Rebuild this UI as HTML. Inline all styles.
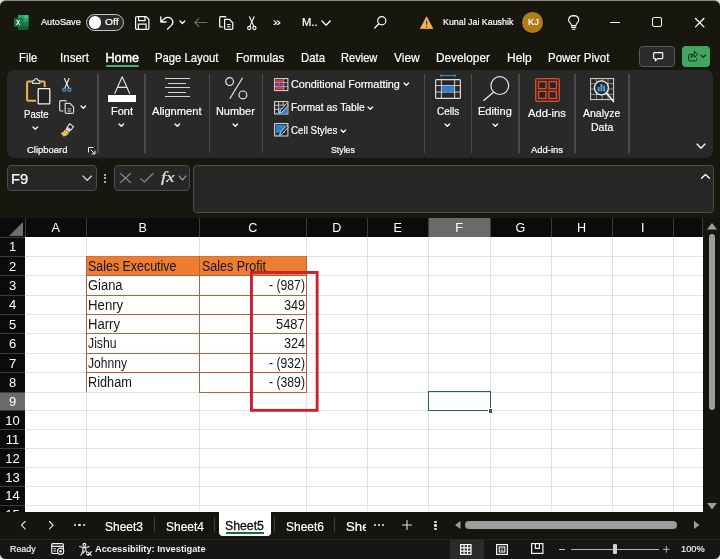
<!DOCTYPE html>
<html><head><meta charset="utf-8"><title>Excel</title>
<style>
*{box-sizing:border-box;margin:0;padding:0}
html,body{width:720px;height:559px;overflow:hidden;background:#dcdcdc}
body{font-family:"Liberation Sans",sans-serif;color:#fff;position:relative;font-size:12px}
#app{position:absolute;left:0;top:0;width:720px;height:559px;background:#17160f;overflow:hidden;border-radius:6px;border-top:1px solid #8d8d8a}
#in{position:absolute;left:0;top:-1px;width:720px;height:559px;will-change:transform}
#app div,#app span,#app svg{position:absolute}
.t{white-space:nowrap;line-height:1;color:#fff;transform-origin:0 0;-webkit-text-stroke:0.2px currentColor}
svg{overflow:visible}
</style></head>
<body>
<div id="app"><div id="in">
<svg style="left:14.00px;top:15.00px;" width="14.50" height="15.00" viewBox="0 0 29 30"><rect x="8" y="0" width="21" height="30" rx="2" fill="#185c37"/><rect x="8" y="0" width="10.5" height="7.5" fill="#21a366"/><rect x="18.5" y="0" width="10.5" height="7.5" fill="#33c481"/><rect x="8" y="7.5" width="10.5" height="7.5" fill="#107c41"/><rect x="18.5" y="7.5" width="10.5" height="7.5" fill="#21a366"/><rect x="8" y="15" width="10.5" height="7.5" fill="#185c37"/><rect x="18.5" y="15" width="10.5" height="7.5" fill="#107c41"/><rect x="0" y="6.5" width="17" height="17" rx="1.5" fill="#107c41"/><text x="8.5" y="19.6" font-family="Liberation Sans, sans-serif" font-weight="bold" font-size="13" fill="#fff" text-anchor="middle">X</text></svg>
<span class="t" style="transform:scaleX(0.987);left:41.49px;top:18.13px;font-size:9.30px;color:#fff;">AutoSave</span>
<div style="left:86.20px;top:13.70px;width:38.20px;height:17.60px;background:#2a2a2a;border:1px solid #c4c4c4;border-radius:9px;"></div>
<div style="left:88.80px;top:16.30px;width:12.40px;height:12.40px;background:#fff;border-radius:50%;"></div>
<span class="t" style="transform:scaleX(1.105);left:104.99px;top:18.13px;font-size:9.30px;color:#fff;">Off</span>
<svg style="left:135.00px;top:15.50px;" width="14.50" height="14.00" viewBox="0 0 14.5 14"><path d="M1.6 0.6 H11 L13.9 3.5 V12.2 Q13.9 13.4 12.7 13.4 H1.8 Q0.6 13.4 0.6 12.2 V1.8 Q0.6 0.6 1.8 0.6 Z" fill="none" stroke="#fff" stroke-width="1.2"/><path d="M3.6 0.8 V4.6 H10 V0.8" fill="none" stroke="#fff" stroke-width="1.2"/><path d="M3.4 13.2 V8.2 H11.1 V13.2" fill="none" stroke="#fff" stroke-width="1.2"/></svg>
<svg style="left:160.00px;top:15.50px;" width="14.00" height="13.50" viewBox="0 0 14 13.5"><path d="M0.8 0.8 V6 H6 M1 5.8 L4.4 2.6 Q8 0 11.2 2.6 Q14.6 6 11.2 9.6 L7.6 13" fill="none" stroke="#fff" stroke-width="1.3" stroke-linecap="round" stroke-linejoin="round" /></svg>
<svg style="left:179.60px;top:21.35px;" width="4.80" height="2.50" viewBox="0 0 4.8 2.5"><path d="M0 0 L2.4 2.5 L4.8 0" fill="none" stroke="#fff" stroke-width="1.25" stroke-linecap="round" stroke-linejoin="round"/></svg>
<svg style="left:193.70px;top:17.50px;" width="13.50" height="9.00" viewBox="0 0 13.5 9"><path d="M13 4.5 H0.8 M4.8 0.6 L0.8 4.5 L4.8 8.4" fill="none" stroke="#6b6b6b" stroke-width="1.2" stroke-linecap="round" stroke-linejoin="round" /></svg>
<svg style="left:218.70px;top:15.50px;" width="14.50" height="14.00" viewBox="0 0 14.5 14"><path d="M4.2 11 H1.8 Q0.7 11 0.7 9.9 V1.8 Q0.7 0.7 1.8 0.7 H6 Q7 0.7 7 1.6" fill="none" stroke="#fff" stroke-width="1.2"/><path d="M5.6 3.4 H10.4 L13.8 6.8 V12.2 Q13.8 13.3 12.7 13.3 H6.7 Q5.6 13.3 5.6 12.2 Z" fill="none" stroke="#fff" stroke-width="1.2"/><path d="M8 8.6 H11.6 M8 10.8 H11.6" stroke="#fff" stroke-width="1"/></svg>
<svg style="left:246.70px;top:15.50px;" width="9.60" height="14.50" viewBox="0 0 10 14.5"><path d="M2.6 0.5 L7.2 10.8 M7.4 0.5 L2.8 10.8" fill="none" stroke="#fff" stroke-width="1.1" stroke-linecap="round"/><circle cx="2.3" cy="12.2" r="1.7" fill="none" stroke="#fff" stroke-width="1.1"/><circle cx="7.7" cy="12.2" r="1.7" fill="none" stroke="#fff" stroke-width="1.1"/></svg>
<span class="t" style="transform:scaleX(1.243);left:272.87px;top:16.57px;font-size:11.50px;color:#fff;">»</span>
<span class="t" style="transform:scaleX(1.123);left:301.95px;top:17.54px;font-size:10.00px;color:#fff;">M..</span>
<svg style="left:322.30px;top:20.60px;" width="8.20" height="4.20" viewBox="0 0 8.2 4.2"><path d="M0 0 L4.1 4.2 L8.2 0" fill="none" stroke="#fff" stroke-width="1.3" stroke-linecap="round" stroke-linejoin="round"/></svg>
<svg style="left:373.70px;top:16.00px;" width="12.60" height="12.80" viewBox="0 0 12.6 12.8"><circle cx="7.8" cy="4.8" r="4.1" fill="none" stroke="#fff" stroke-width="1.2"/><path d="M4.8 7.8 L0.7 12" stroke="#fff" stroke-width="1.3" stroke-linecap="round"/></svg>
<svg style="left:420.00px;top:15.50px;" width="13.20" height="13.20" viewBox="0 0 13.2 13.2"><path d="M6.6 0.8 L12.8 12.6 H0.4 Z" fill="#f0b45a" stroke="#f0b45a" stroke-width="0.8" stroke-linejoin="round"/><path d="M6.6 4.6 V8.8" stroke="#5a3a10" stroke-width="1.3"/><circle cx="6.6" cy="10.8" r="0.8" fill="#5a3a10"/></svg>
<span class="t" style="transform:scaleX(0.952);left:443.19px;top:18.13px;font-size:9.30px;color:#fff;">Kunal Jai Kaushik</span>
<div style="left:522.30px;top:11.60px;width:21.00px;height:21.00px;background:#b07d1d;border-radius:50%;"></div>
<span class="t" style="transform:scaleX(1.071);left:527.73px;top:18.32px;font-size:8.60px;color:#fff;">KJ</span>
<svg style="left:567.50px;top:15.00px;" width="11.40" height="15.00" viewBox="0 0 11.4 15"><path d="M3.4 10.6 Q3.4 9 2.2 7.8 Q0.6 6.4 0.6 5 Q0.8 0.7 5.7 0.6 Q10.6 0.7 10.8 5 Q10.8 6.4 9.2 7.8 Q8 9 8 10.6 Z" fill="none" stroke="#fff" stroke-width="1.1" stroke-linejoin="round"/><path d="M3.6 12.4 H7.8 M4.4 14.2 H7" stroke="#fff" stroke-width="1.1" stroke-linecap="round"/></svg>
<div style="left:610.00px;top:21.60px;width:9.60px;height:1.20px;background:#fff;"></div>
<div style="left:652.00px;top:17.40px;width:10.40px;height:9.80px;background:transparent;border:1.3px solid #fff;border-radius:2px;"></div>
<svg style="left:695.00px;top:17.80px;" width="9.40" height="9.40" viewBox="0 0 9.4 9.4"><path d="M0.5 0.5 L8.9 8.9 M8.9 0.5 L0.5 8.9" fill="none" stroke="#fff" stroke-width="1.3" stroke-linecap="round" stroke-linejoin="round" /></svg>
<span class="t" style="transform:scaleX(0.896);left:18.81px;top:51.53px;font-size:12.60px;color:#fff;">File</span>
<span class="t" style="transform:scaleX(0.917);left:59.81px;top:51.53px;font-size:12.60px;color:#fff;">Insert</span>
<span class="t" style="transform:scaleX(0.896);left:155.31px;top:51.53px;font-size:12.60px;color:#fff;">Page Layout</span>
<span class="t" style="transform:scaleX(0.918);left:236.31px;top:51.53px;font-size:12.60px;color:#fff;">Formulas</span>
<span class="t" style="transform:scaleX(0.905);left:301.11px;top:51.53px;font-size:12.60px;color:#fff;">Data</span>
<span class="t" style="transform:scaleX(0.881);left:341.31px;top:51.53px;font-size:12.60px;color:#fff;">Review</span>
<span class="t" style="transform:scaleX(0.949);left:393.81px;top:51.53px;font-size:12.60px;color:#fff;">View</span>
<span class="t" style="transform:scaleX(0.939);left:435.61px;top:51.53px;font-size:12.60px;color:#fff;">Developer</span>
<span class="t" style="transform:scaleX(0.953);left:506.81px;top:51.53px;font-size:12.60px;color:#fff;">Help</span>
<span class="t" style="transform:scaleX(0.913);left:548.11px;top:51.53px;font-size:12.60px;color:#fff;">Power Pivot</span>
<span class="t" style="transform:scaleX(1.000);left:105.51px;top:51.53px;font-size:12.60px;color:#fff;-webkit-text-stroke:0.45px #fff;">Home</span>
<div style="left:106.20px;top:65.40px;width:32.40px;height:1.60px;background:#4fae74;border-radius:1px;"></div>
<div style="left:639.00px;top:46.30px;width:36.30px;height:20.40px;background:#2b2b2b;border:1px solid #5c5c5c;border-radius:4px;"></div>
<svg style="left:652.50px;top:51.50px;" width="10.40" height="9.60" viewBox="0 0 10.4 9.6"><path d="M1.4 0.6 H9 Q9.8 0.6 9.8 1.4 V5.8 Q9.8 6.6 9 6.6 H4.6 L2.4 8.8 V6.6 H1.4 Q0.6 6.6 0.6 5.8 V1.4 Q0.6 0.6 1.4 0.6 Z" fill="none" stroke="#fff" stroke-width="1.1" stroke-linecap="round" stroke-linejoin="round" /></svg>
<div style="left:682.00px;top:46.30px;width:28.20px;height:20.40px;background:#41a65f;border-radius:4px;"></div>
<svg style="left:688.00px;top:51.00px;" width="10.50" height="10.50" viewBox="0 0 10.5 10.5"><path d="M4 3.4 H1.6 Q0.6 3.4 0.6 4.4 V8.9 Q0.6 9.9 1.6 9.9 H7.6 Q8.6 9.9 8.6 8.9 V7.6 M6.6 0.6 L9.9 3.4 L6.6 6.2 V4.4 Q4 4.4 3 6.8 Q3 2.6 6.6 2.4 Z" fill="none" stroke="#14301d" stroke-width="1.0" stroke-linecap="round" stroke-linejoin="round" /></svg>
<svg style="left:701.30px;top:55.20px;" width="4.60" height="2.40" viewBox="0 0 4.6 2.4"><path d="M0 0 L2.3 2.4 L4.6 0" fill="none" stroke="#14301d" stroke-width="1.2" stroke-linecap="round" stroke-linejoin="round"/></svg>
<div style="left:7.00px;top:70.00px;width:706.00px;height:87.50px;background:#292929;border-radius:7px;"></div>
<div style="left:97.35px;top:74.00px;width:1.30px;height:78.80px;background:#4a4a4a;"></div>
<div style="left:144.35px;top:74.00px;width:1.30px;height:78.80px;background:#4a4a4a;"></div>
<div style="left:208.85px;top:74.00px;width:1.30px;height:78.80px;background:#4a4a4a;"></div>
<div style="left:261.85px;top:74.00px;width:1.30px;height:78.80px;background:#4a4a4a;"></div>
<div style="left:423.85px;top:74.00px;width:1.30px;height:78.80px;background:#4a4a4a;"></div>
<div style="left:470.85px;top:74.00px;width:1.30px;height:78.80px;background:#4a4a4a;"></div>
<div style="left:518.35px;top:74.00px;width:1.30px;height:78.80px;background:#4a4a4a;"></div>
<div style="left:574.35px;top:74.00px;width:1.30px;height:78.80px;background:#4a4a4a;"></div>
<div style="left:628.35px;top:74.00px;width:1.30px;height:78.80px;background:#4a4a4a;"></div>
<svg style="left:25.70px;top:77.50px;" width="24.50" height="27.00" viewBox="0 0 24.5 27"><path d="M7 3.6 H2.4 Q1.1 3.6 1.1 4.9 V21.4 Q1.1 22.7 2.4 22.7 H10" fill="none" stroke="#f0b252" stroke-width="2"/><path d="M14 3.6 H17.4 Q18.7 3.6 18.7 4.9 V9" fill="none" stroke="#f0b252" stroke-width="2"/><path d="M6.6 5.4 V3.4 Q6.6 2.4 7.6 2.4 H8.4 Q8.6 0.6 10.2 0.6 Q11.8 0.6 12 2.4 H12.8 Q13.8 2.4 13.8 3.4 V5.4 Z" fill="#292929" stroke="#d8d8d8" stroke-width="1.1" stroke-linejoin="round"/><rect x="12.2" y="10.6" width="11.6" height="15.2" rx="0.6" fill="#222" stroke="#f0f0f0" stroke-width="1.3"/></svg>
<span class="t" style="transform:scaleX(0.812);left:23.95px;top:109.41px;font-size:11.80px;color:#fff;">Paste</span>
<svg style="left:33.20px;top:126.65px;" width="4.60" height="2.30" viewBox="0 0 4.6 2.3"><path d="M0 0 L2.3 2.3 L4.6 0" fill="none" stroke="#fff" stroke-width="1.25" stroke-linecap="round" stroke-linejoin="round"/></svg>
<svg style="left:61.70px;top:77.50px;" width="9.60" height="14.00" viewBox="0 0 10 14.5"><path d="M2.6 0.5 L7.2 10.8 M7.4 0.5 L2.8 10.8" fill="none" stroke="#fff" stroke-width="1.1" stroke-linecap="round"/><circle cx="2.3" cy="12.2" r="1.7" fill="none" stroke="#4aa3e8" stroke-width="1.1"/><circle cx="7.7" cy="12.2" r="1.7" fill="none" stroke="#4aa3e8" stroke-width="1.1"/></svg>
<svg style="left:58.70px;top:100.00px;" width="15.50" height="14.00" viewBox="0 0 15.5 14"><path d="M4.6 11 H1.8 Q0.7 11 0.7 9.9 V1.8 Q0.7 0.7 1.8 0.7 H6.4 Q7.4 0.7 7.4 1.6" fill="none" stroke="#d8d8d8" stroke-width="1.2"/><path d="M6.2 3.4 H11 L14.6 7 V12.2 Q14.6 13.3 13.5 13.3 H7.3 Q6.2 13.3 6.2 12.2 Z" fill="none" stroke="#d8d8d8" stroke-width="1.2"/><path d="M8.6 8.8 H12.2 M8.6 11 H12.2" stroke="#d8d8d8" stroke-width="1"/></svg>
<svg style="left:81.00px;top:106.25px;" width="4.60" height="2.30" viewBox="0 0 4.6 2.3"><path d="M0 0 L2.3 2.3 L4.6 0" fill="none" stroke="#fff" stroke-width="1.25" stroke-linecap="round" stroke-linejoin="round"/></svg>
<svg style="left:60.00px;top:122.50px;" width="14.50" height="14.00" viewBox="0 0 14.5 14"><path d="M9.6 0.8 L13.6 3.6 L11 7 L7.2 4.2 Z" fill="none" stroke="#e6e6e6" stroke-width="1.1" stroke-linejoin="round"/><path d="M6.6 4.6 L10.6 7.6 L9.4 9.2 L5.4 6.2 Z" fill="#e6e6e6"/><path d="M5 6.6 L9 9.6 Q7.4 13.6 3.4 13.4 L0.6 10 Q3.6 9.6 5 6.6 Z" fill="#eeb75c"/></svg>
<span class="t" style="transform:scaleX(1.007);left:27.28px;top:145.04px;font-size:9.40px;color:#fff;">Clipboard</span>
<svg style="left:87.80px;top:146.50px;" width="7.60" height="7.40" viewBox="0 0 7.6 7.4"><path d="M0.5 5.4 V0.5 H5.4 M2.8 2.8 L6.8 6.8 M7 3.6 V7 H3.6" fill="none" stroke="#f0f0f0" stroke-width="1"/></svg>
<svg style="left:113.70px;top:76.30px;" width="16.40" height="18.20" viewBox="0 0 16.4 18.2"><path d="M0.6 17.8 L8.2 0.8 L15.8 17.8 M3.6 11.4 H12.8" fill="none" stroke="#e8e8e8" stroke-width="1.1" stroke-linejoin="round"/></svg>
<div style="left:107.60px;top:94.60px;width:28.60px;height:7.60px;background:#fff;"></div>
<span class="t" style="transform:scaleX(0.932);left:111.15px;top:106.11px;font-size:11.80px;color:#fff;">Font</span>
<svg style="left:119.20px;top:124.05px;" width="4.60" height="2.30" viewBox="0 0 4.6 2.3"><path d="M0 0 L2.3 2.3 L4.6 0" fill="none" stroke="#fff" stroke-width="1.25" stroke-linecap="round" stroke-linejoin="round"/></svg>
<div style="left:165.00px;top:78.40px;width:24.80px;height:1.10px;background:#d4d4d4;"></div>
<div style="left:168.40px;top:82.80px;width:17.80px;height:1.10px;background:#d4d4d4;"></div>
<div style="left:165.00px;top:87.20px;width:24.80px;height:1.10px;background:#d4d4d4;"></div>
<div style="left:168.40px;top:91.60px;width:17.80px;height:1.10px;background:#d4d4d4;"></div>
<div style="left:165.00px;top:96.00px;width:24.80px;height:1.10px;background:#d4d4d4;"></div>
<span class="t" style="transform:scaleX(0.945);left:152.35px;top:106.11px;font-size:11.80px;color:#fff;">Alignment</span>
<svg style="left:174.70px;top:124.05px;" width="4.60" height="2.30" viewBox="0 0 4.6 2.3"><path d="M0 0 L2.3 2.3 L4.6 0" fill="none" stroke="#fff" stroke-width="1.25" stroke-linecap="round" stroke-linejoin="round"/></svg>
<svg style="left:225.00px;top:77.00px;" width="22.50" height="22.50" viewBox="0 0 22.5 22.5"><circle cx="4.6" cy="4.6" r="3.9" fill="none" stroke="#e8e8e8" stroke-width="1.2"/><circle cx="17.9" cy="17.9" r="3.9" fill="none" stroke="#e8e8e8" stroke-width="1.2"/><path d="M17.6 0.8 L4.8 21.8" stroke="#e8e8e8" stroke-width="1.2"/></svg>
<span class="t" style="transform:scaleX(0.924);left:216.35px;top:106.11px;font-size:11.80px;color:#fff;">Number</span>
<svg style="left:233.40px;top:124.05px;" width="4.60" height="2.30" viewBox="0 0 4.6 2.3"><path d="M0 0 L2.3 2.3 L4.6 0" fill="none" stroke="#fff" stroke-width="1.25" stroke-linecap="round" stroke-linejoin="round"/></svg>
<svg style="left:273.70px;top:77.50px;" width="14.50" height="13.20" viewBox="0 0 14.5 13.2"><rect x="0.6" y="0.6" width="13.3" height="12" fill="#292929" stroke="#e0e0e0" stroke-width="1"/><path d="M0.6 4.4 H13.9 M0.6 8.6 H13.9 M9.8 0.6 V12.6" stroke="#d8d8d8" stroke-width="0.7"/><rect x="1.8" y="1.6" width="7.2" height="2.6" fill="#ee2f3a"/><rect x="10.6" y="1.8" width="2" height="2" fill="#1c1c1c"/><rect x="3.6" y="4.6" width="3" height="4" fill="#3a7bd5"/><rect x="1.6" y="5.2" width="1.4" height="2.8" fill="#ee2f3a"/><rect x="7.2" y="5.2" width="1.6" height="2.8" fill="#ee2f3a"/><rect x="1.8" y="9" width="7.2" height="2.6" fill="#ee2f3a"/></svg>
<span class="t" style="transform:scaleX(0.917);left:291.35px;top:79.01px;font-size:11.80px;color:#fff;">Conditional Formatting</span>
<svg style="left:403.70px;top:83.45px;" width="4.60" height="2.30" viewBox="0 0 4.6 2.3"><path d="M0 0 L2.3 2.3 L4.6 0" fill="none" stroke="#fff" stroke-width="1.25" stroke-linecap="round" stroke-linejoin="round"/></svg>
<svg style="left:273.70px;top:101.00px;" width="14.50" height="13.60" viewBox="0 0 14.5 13.6"><rect x="0.6" y="0.6" width="13.3" height="12.4" fill="#292929" stroke="#e0e0e0" stroke-width="1"/><rect x="4.8" y="6.6" width="8.6" height="5.8" fill="#2f7fd8"/><path d="M0.6 4.2 H13.9 M0.6 8.4 H4.6 M4.6 0.6 V13 M9.2 0.6 V4.2" stroke="#e0e0e0" stroke-width="0.8"/><path d="M12.6 2.4 L14.4 4 L8.4 10.8 L5.4 12.4 L6.6 9.2 Z" fill="#292929" stroke="#e8e8e8" stroke-width="0.9" stroke-linejoin="round"/><path d="M5.4 12.4 Q3 13.4 2.4 11.4" fill="none" stroke="#4aa3e8" stroke-width="1"/></svg>
<span class="t" style="transform:scaleX(0.875);left:291.35px;top:102.21px;font-size:11.80px;color:#fff;">Format as Table</span>
<svg style="left:368.30px;top:106.85px;" width="4.60" height="2.30" viewBox="0 0 4.6 2.3"><path d="M0 0 L2.3 2.3 L4.6 0" fill="none" stroke="#fff" stroke-width="1.25" stroke-linecap="round" stroke-linejoin="round"/></svg>
<svg style="left:273.70px;top:123.40px;" width="14.50" height="13.60" viewBox="0 0 14.5 13.6"><rect x="0.6" y="0.6" width="13.3" height="12.4" fill="#292929" stroke="#e0e0e0" stroke-width="1"/><rect x="1.8" y="1.8" width="9" height="8" fill="#2f7fd8"/><path d="M12.6 2.4 L14.4 4 L8.4 10.8 L5.4 12.4 L6.6 9.2 Z" fill="#292929" stroke="#e8e8e8" stroke-width="0.9" stroke-linejoin="round"/><path d="M5.4 12.4 Q3 13.4 2.4 11.4" fill="none" stroke="#4aa3e8" stroke-width="1"/></svg>
<span class="t" style="transform:scaleX(0.831);left:291.35px;top:125.01px;font-size:11.80px;color:#fff;">Cell Styles</span>
<svg style="left:340.70px;top:129.65px;" width="4.60" height="2.30" viewBox="0 0 4.6 2.3"><path d="M0 0 L2.3 2.3 L4.6 0" fill="none" stroke="#fff" stroke-width="1.25" stroke-linecap="round" stroke-linejoin="round"/></svg>
<span class="t" style="transform:scaleX(0.934);left:331.28px;top:145.04px;font-size:9.40px;color:#fff;">Styles</span>
<svg style="left:435.00px;top:74.00px;" width="26.00" height="25.00" viewBox="0 0 26 25"><path d="M6 1.6 H20 M6 0 V3.2 M20 0 V3.2" stroke="#3f8fe6" stroke-width="1"/><rect x="0.6" y="5.6" width="24.8" height="18.8" rx="1" fill="#292929" stroke="#e0e0e0" stroke-width="1.1"/><path d="M0.6 11.6 H25.4 M0.6 18 H25.4 M6.4 5.6 V24.4 M19.6 5.6 V24.4" stroke="#e0e0e0" stroke-width="0.9"/><rect x="6.9" y="12.1" width="12.2" height="5.4" fill="#2f7fd8"/></svg>
<span class="t" style="transform:scaleX(0.850);left:436.85px;top:105.81px;font-size:11.80px;color:#fff;">Cells</span>
<svg style="left:445.40px;top:124.05px;" width="4.60" height="2.30" viewBox="0 0 4.6 2.3"><path d="M0 0 L2.3 2.3 L4.6 0" fill="none" stroke="#fff" stroke-width="1.25" stroke-linecap="round" stroke-linejoin="round"/></svg>
<svg style="left:482.50px;top:76.00px;" width="26.50" height="25.00" viewBox="0 0 26.5 25"><circle cx="16.8" cy="9.6" r="8.9" fill="none" stroke="#e8e8e8" stroke-width="1.2"/><path d="M10.4 16.2 L0.8 24.4" stroke="#e8e8e8" stroke-width="1.3" stroke-linecap="round"/></svg>
<span class="t" style="transform:scaleX(0.937);left:478.35px;top:105.81px;font-size:11.80px;color:#fff;">Editing</span>
<svg style="left:492.70px;top:124.05px;" width="4.60" height="2.30" viewBox="0 0 4.6 2.3"><path d="M0 0 L2.3 2.3 L4.6 0" fill="none" stroke="#fff" stroke-width="1.25" stroke-linecap="round" stroke-linejoin="round"/></svg>
<svg style="left:535.00px;top:77.50px;" width="25.00" height="24.00" viewBox="0 0 25 24"><rect x="0.7" y="0.7" width="23.6" height="22.6" rx="1.5" fill="#47221a" stroke="#d5532c" stroke-width="1.3"/><rect x="3.6" y="3.6" width="7.4" height="7" fill="#2a2422" stroke="#d5532c" stroke-width="1.3"/><rect x="14" y="3.6" width="7.4" height="7" fill="#2a2422" stroke="#d5532c" stroke-width="1.3"/><rect x="3.6" y="13.4" width="7.4" height="7" fill="#2a2422" stroke="#d5532c" stroke-width="1.3"/><rect x="14" y="13.4" width="7.4" height="7" fill="#2a2422" stroke="#d5532c" stroke-width="1.3"/></svg>
<span class="t" style="transform:scaleX(0.945);left:528.35px;top:107.61px;font-size:11.80px;color:#fff;">Add-ins</span>
<span class="t" style="transform:scaleX(1.007);left:530.98px;top:145.04px;font-size:9.40px;color:#fff;">Add-ins</span>
<svg style="left:590.00px;top:77.50px;" width="25.00" height="25.00" viewBox="0 0 25 25"><rect x="0.6" y="0.6" width="23" height="21" fill="#292929" stroke="#d8d8d8" stroke-width="1"/><path d="M0.6 5.6 H23.6 M0.6 11 H23.6 M0.6 16.4 H23.6 M6.4 0.6 V21.6 M12.2 0.6 V21.6 M18 0.6 V21.6" stroke="#bdbdbd" stroke-width="0.7"/><circle cx="11.4" cy="9.8" r="7" fill="#292929" stroke="#f0f0f0" stroke-width="1.3"/><rect x="7.6" y="9" width="2" height="4.4" fill="#4aa3e8"/><rect x="10.4" y="6" width="2" height="7.4" fill="#4aa3e8"/><rect x="13.2" y="7.6" width="2" height="5.8" fill="#4aa3e8"/><path d="M16.4 15 L23.6 23.6" stroke="#f0f0f0" stroke-width="1.6" stroke-linecap="round"/></svg>
<span class="t" style="transform:scaleX(0.888);left:583.35px;top:107.61px;font-size:11.80px;color:#fff;">Analyze</span>
<span class="t" style="transform:scaleX(0.895);left:590.85px;top:121.61px;font-size:11.80px;color:#fff;">Data</span>
<svg style="left:696.50px;top:144.40px;" width="8.00" height="4.20" viewBox="0 0 8 4.2"><path d="M0 0 L4.0 4.2 L8 0" fill="none" stroke="#fff" stroke-width="1.3" stroke-linecap="round" stroke-linejoin="round"/></svg>
<div style="left:7.00px;top:165.00px;width:90.00px;height:25.50px;background:#272727;border:1px solid #4b4b49;border-radius:4px;"></div>
<div style="left:113.70px;top:165.00px;width:76.00px;height:25.50px;background:#272727;border:1px solid #4b4b49;border-radius:4px;"></div>
<div style="left:193.00px;top:165.00px;width:521.00px;height:47.50px;background:#272727;border:1px solid #4b4b49;border-radius:4px;"></div>
<span class="t" style="transform:scaleX(1.042);left:10.52px;top:171.58px;font-size:14.20px;color:#fff;">F9</span>
<svg style="left:82.60px;top:176.10px;" width="8.40" height="4.40" viewBox="0 0 8.4 4.4"><path d="M0 0 L4.2 4.4 L8.4 0" fill="none" stroke="#e0e0e0" stroke-width="1.2" stroke-linecap="round" stroke-linejoin="round"/></svg>
<div style="left:104.20px;top:173.60px;width:2.00px;height:2.00px;background:#e0e0e0;border-radius:50%;"></div>
<div style="left:104.20px;top:177.20px;width:2.00px;height:2.00px;background:#e0e0e0;border-radius:50%;"></div>
<div style="left:104.20px;top:180.80px;width:2.00px;height:2.00px;background:#e0e0e0;border-radius:50%;"></div>
<svg style="left:119.70px;top:173.00px;" width="11.00" height="10.00" viewBox="0 0 11 10"><path d="M0.5 0.5 L10.5 9.5 M10.5 0.5 L0.5 9.5" fill="none" stroke="#8a8a8a" stroke-width="1.1" stroke-linecap="round" stroke-linejoin="round" /></svg>
<svg style="left:139.50px;top:173.40px;" width="13.60" height="9.40" viewBox="0 0 13.6 9.4"><path d="M0.5 5.6 L4.4 9 L13.1 0.5" fill="none" stroke="#8a8a8a" stroke-width="1.1" stroke-linecap="round" stroke-linejoin="round" /></svg>
<span class="t" style="transform:scaleX(1.339);left:161.23px;top:171.35px;font-size:14.00px;color:#e4e4e4;font-family:'Liberation Serif',serif;font-style:italic;">fx</span>
<svg style="left:178.80px;top:176.40px;" width="7.00" height="3.80" viewBox="0 0 7 3.8"><path d="M0 0 L3.5 3.8 L7 0" fill="none" stroke="#b0b0b0" stroke-width="1.1" stroke-linecap="round" stroke-linejoin="round"/></svg>
<svg style="left:700.80px;top:174.20px;" width="9.00" height="4.80" viewBox="0 0 9 4.8"><path d="M0.5 4.3 L4.5 0.5 L8.5 4.3" fill="none" stroke="#fff" stroke-width="1.3" stroke-linecap="round" stroke-linejoin="round" /></svg>
<div style="left:0.00px;top:218.00px;width:702.50px;height:293.50px;background:#fff;"></div>
<div style="left:0.00px;top:218.00px;width:702.50px;height:19.00px;background:#0b0b0b;"></div>
<div style="left:0.00px;top:218.00px;width:25.00px;height:293.50px;background:#0b0b0b;"></div>
<div style="left:428.80px;top:218.00px;width:61.20px;height:19.00px;background:#6a6a6a;"></div>
<div style="left:0.00px;top:392.50px;width:25.00px;height:18.30px;background:#6a6a6a;"></div>
<svg style="left:9.00px;top:221.50px;" width="14.00" height="14.00" viewBox="0 0 14 14"><path d="M14 0 V14 H0 Z" fill="#6e6e6e"/></svg>
<div style="left:85.80px;top:218.00px;width:1.00px;height:19.00px;background:#3c3c3c;"></div>
<span class="t" style="left:35.65px;top:221.63px;width:40px;text-align:center;font-size:12.6px;-webkit-text-stroke:0;">A</span>
<div style="left:198.80px;top:218.00px;width:1.00px;height:19.00px;background:#3c3c3c;"></div>
<span class="t" style="left:122.80px;top:221.63px;width:40px;text-align:center;font-size:12.6px;-webkit-text-stroke:0;">B</span>
<div style="left:305.80px;top:218.00px;width:1.00px;height:19.00px;background:#3c3c3c;"></div>
<span class="t" style="left:232.80px;top:221.63px;width:40px;text-align:center;font-size:12.6px;-webkit-text-stroke:0;">C</span>
<div style="left:366.80px;top:218.00px;width:1.00px;height:19.00px;background:#3c3c3c;"></div>
<span class="t" style="left:316.80px;top:221.63px;width:40px;text-align:center;font-size:12.6px;-webkit-text-stroke:0;">D</span>
<div style="left:427.80px;top:218.00px;width:1.00px;height:19.00px;background:#3c3c3c;"></div>
<span class="t" style="left:377.80px;top:221.63px;width:40px;text-align:center;font-size:12.6px;-webkit-text-stroke:0;">E</span>
<div style="left:489.50px;top:218.00px;width:1.00px;height:19.00px;background:#3c3c3c;"></div>
<span class="t" style="left:439.15px;top:221.63px;width:40px;text-align:center;font-size:12.6px;-webkit-text-stroke:0;">F</span>
<div style="left:550.50px;top:218.00px;width:1.00px;height:19.00px;background:#3c3c3c;"></div>
<span class="t" style="left:500.50px;top:221.63px;width:40px;text-align:center;font-size:12.6px;-webkit-text-stroke:0;">G</span>
<div style="left:611.80px;top:218.00px;width:1.00px;height:19.00px;background:#3c3c3c;"></div>
<span class="t" style="left:561.65px;top:221.63px;width:40px;text-align:center;font-size:12.6px;-webkit-text-stroke:0;">H</span>
<div style="left:672.80px;top:218.00px;width:1.00px;height:19.00px;background:#3c3c3c;"></div>
<span class="t" style="left:622.80px;top:221.63px;width:40px;text-align:center;font-size:12.6px;-webkit-text-stroke:0;">I</span>
<div style="left:702.00px;top:218.00px;width:1.00px;height:19.00px;background:#3c3c3c;"></div>
<div style="left:24.50px;top:218.00px;width:1.00px;height:19.00px;background:#3c3c3c;"></div>
<div style="left:85.80px;top:237.30px;width:1.00px;height:274.20px;background:#dde4e2;"></div>
<div style="left:198.80px;top:237.30px;width:1.00px;height:274.20px;background:#dde4e2;"></div>
<div style="left:305.80px;top:237.30px;width:1.00px;height:274.20px;background:#dde4e2;"></div>
<div style="left:366.80px;top:237.30px;width:1.00px;height:274.20px;background:#dde4e2;"></div>
<div style="left:427.80px;top:237.30px;width:1.00px;height:274.20px;background:#dde4e2;"></div>
<div style="left:489.50px;top:237.30px;width:1.00px;height:274.20px;background:#dde4e2;"></div>
<div style="left:550.50px;top:237.30px;width:1.00px;height:274.20px;background:#dde4e2;"></div>
<div style="left:611.80px;top:237.30px;width:1.00px;height:274.20px;background:#dde4e2;"></div>
<div style="left:672.80px;top:237.30px;width:1.00px;height:274.20px;background:#dde4e2;"></div>
<div style="left:25.00px;top:255.90px;width:677.50px;height:1.00px;background:#dde4e2;"></div>
<div style="left:0.00px;top:255.90px;width:25.00px;height:1.00px;background:#3c3c3c;"></div>
<div style="left:25.00px;top:275.30px;width:677.50px;height:1.00px;background:#dde4e2;"></div>
<div style="left:0.00px;top:275.30px;width:25.00px;height:1.00px;background:#3c3c3c;"></div>
<div style="left:25.00px;top:294.60px;width:677.50px;height:1.00px;background:#dde4e2;"></div>
<div style="left:0.00px;top:294.60px;width:25.00px;height:1.00px;background:#3c3c3c;"></div>
<div style="left:25.00px;top:314.00px;width:677.50px;height:1.00px;background:#dde4e2;"></div>
<div style="left:0.00px;top:314.00px;width:25.00px;height:1.00px;background:#3c3c3c;"></div>
<div style="left:25.00px;top:333.40px;width:677.50px;height:1.00px;background:#dde4e2;"></div>
<div style="left:0.00px;top:333.40px;width:25.00px;height:1.00px;background:#3c3c3c;"></div>
<div style="left:25.00px;top:352.70px;width:677.50px;height:1.00px;background:#dde4e2;"></div>
<div style="left:0.00px;top:352.70px;width:25.00px;height:1.00px;background:#3c3c3c;"></div>
<div style="left:25.00px;top:372.10px;width:677.50px;height:1.00px;background:#dde4e2;"></div>
<div style="left:0.00px;top:372.10px;width:25.00px;height:1.00px;background:#3c3c3c;"></div>
<div style="left:25.00px;top:391.50px;width:677.50px;height:1.00px;background:#dde4e2;"></div>
<div style="left:0.00px;top:391.50px;width:25.00px;height:1.00px;background:#3c3c3c;"></div>
<div style="left:25.00px;top:410.30px;width:677.50px;height:1.00px;background:#dde4e2;"></div>
<div style="left:0.00px;top:410.30px;width:25.00px;height:1.00px;background:#3c3c3c;"></div>
<div style="left:25.00px;top:429.20px;width:677.50px;height:1.00px;background:#dde4e2;"></div>
<div style="left:0.00px;top:429.20px;width:25.00px;height:1.00px;background:#3c3c3c;"></div>
<div style="left:25.00px;top:448.10px;width:677.50px;height:1.00px;background:#dde4e2;"></div>
<div style="left:0.00px;top:448.10px;width:25.00px;height:1.00px;background:#3c3c3c;"></div>
<div style="left:25.00px;top:467.00px;width:677.50px;height:1.00px;background:#dde4e2;"></div>
<div style="left:0.00px;top:467.00px;width:25.00px;height:1.00px;background:#3c3c3c;"></div>
<div style="left:25.00px;top:485.80px;width:677.50px;height:1.00px;background:#dde4e2;"></div>
<div style="left:0.00px;top:485.80px;width:25.00px;height:1.00px;background:#3c3c3c;"></div>
<div style="left:25.00px;top:504.70px;width:677.50px;height:1.00px;background:#dde4e2;"></div>
<div style="left:0.00px;top:504.70px;width:25.00px;height:1.00px;background:#3c3c3c;"></div>
<div style="left:0.00px;top:236.80px;width:25.00px;height:1.00px;background:#3c3c3c;"></div>
<span class="t" style="left:0;top:240.45px;width:25px;text-align:center;font-size:13px;-webkit-text-stroke:0;">1</span>
<span class="t" style="left:0;top:259.70px;width:25px;text-align:center;font-size:13px;-webkit-text-stroke:0;">2</span>
<span class="t" style="left:0;top:279.05px;width:25px;text-align:center;font-size:13px;-webkit-text-stroke:0;">3</span>
<span class="t" style="left:0;top:298.40px;width:25px;text-align:center;font-size:13px;-webkit-text-stroke:0;">4</span>
<span class="t" style="left:0;top:317.80px;width:25px;text-align:center;font-size:13px;-webkit-text-stroke:0;">5</span>
<span class="t" style="left:0;top:337.15px;width:25px;text-align:center;font-size:13px;-webkit-text-stroke:0;">6</span>
<span class="t" style="left:0;top:356.50px;width:25px;text-align:center;font-size:13px;-webkit-text-stroke:0;">7</span>
<span class="t" style="left:0;top:375.90px;width:25px;text-align:center;font-size:13px;-webkit-text-stroke:0;">8</span>
<span class="t" style="left:0;top:395.00px;width:25px;text-align:center;font-size:13px;-webkit-text-stroke:0;">9</span>
<span class="t" style="left:0;top:413.85px;width:25px;text-align:center;font-size:13px;-webkit-text-stroke:0;">10</span>
<span class="t" style="left:0;top:432.75px;width:25px;text-align:center;font-size:13px;-webkit-text-stroke:0;">11</span>
<span class="t" style="left:0;top:451.65px;width:25px;text-align:center;font-size:13px;-webkit-text-stroke:0;">12</span>
<span class="t" style="left:0;top:470.50px;width:25px;text-align:center;font-size:13px;-webkit-text-stroke:0;">13</span>
<span class="t" style="left:0;top:489.35px;width:25px;text-align:center;font-size:13px;-webkit-text-stroke:0;">14</span>
<span class="t" style="left:0;top:508.25px;width:25px;text-align:center;font-size:13px;-webkit-text-stroke:0;">15</span>
<div style="left:86.30px;top:256.40px;width:220.00px;height:19.40px;background:#ed7d31;"></div>
<div style="left:85.80px;top:255.90px;width:221.00px;height:1.00px;background:#d9722c;"></div>
<div style="left:85.80px;top:275.30px;width:221.00px;height:1.00px;background:#ac643b;"></div>
<div style="left:85.80px;top:294.60px;width:221.00px;height:1.00px;background:#ac643b;"></div>
<div style="left:85.80px;top:314.00px;width:221.00px;height:1.00px;background:#ac643b;"></div>
<div style="left:85.80px;top:333.40px;width:221.00px;height:1.00px;background:#ac643b;"></div>
<div style="left:85.80px;top:352.70px;width:221.00px;height:1.00px;background:#ac643b;"></div>
<div style="left:85.80px;top:372.10px;width:221.00px;height:1.00px;background:#ac643b;"></div>
<div style="left:198.80px;top:391.50px;width:108.00px;height:1.00px;background:#ac643b;"></div>
<div style="left:85.80px;top:255.90px;width:1.00px;height:136.60px;background:#ac643b;"></div>
<div style="left:198.80px;top:255.90px;width:1.00px;height:136.60px;background:#ac643b;"></div>
<div style="left:305.80px;top:255.90px;width:1.00px;height:136.60px;background:#ac643b;"></div>
<span class="t" style="transform:scaleX(0.888);left:87.93px;top:258.95px;font-size:14.00px;color:#161616;-webkit-text-stroke:0;">Sales Executive</span>
<span class="t" style="transform:scaleX(0.893);left:202.03px;top:258.95px;font-size:14.00px;color:#161616;-webkit-text-stroke:0;">Sales Profit</span>
<span class="t" style="transform:scaleX(0.925);left:87.93px;top:278.35px;font-size:14.00px;color:#161616;-webkit-text-stroke:0;">Giana</span>
<span class="t" style="transform:scaleX(0.943);left:87.93px;top:297.65px;font-size:14.00px;color:#161616;-webkit-text-stroke:0;">Henry</span>
<span class="t" style="transform:scaleX(0.936);left:87.93px;top:317.05px;font-size:14.00px;color:#161616;-webkit-text-stroke:0;">Harry</span>
<span class="t" style="transform:scaleX(0.876);left:87.93px;top:336.45px;font-size:14.00px;color:#161616;-webkit-text-stroke:0;">Jishu</span>
<span class="t" style="transform:scaleX(0.865);left:87.93px;top:355.75px;font-size:14.00px;color:#161616;-webkit-text-stroke:0;">Johnny</span>
<span class="t" style="transform:scaleX(0.909);left:87.93px;top:375.15px;font-size:14.00px;color:#161616;-webkit-text-stroke:0;">Ridham</span>
<span class="t" style="transform:scaleX(0.872);left:268.83px;top:278.35px;font-size:14.00px;color:#161616;-webkit-text-stroke:0;">- (987)</span>
<span class="t" style="transform:scaleX(0.905);left:283.63px;top:297.65px;font-size:14.00px;color:#161616;-webkit-text-stroke:0;">349</span>
<span class="t" style="transform:scaleX(0.919);left:276.13px;top:317.05px;font-size:14.00px;color:#161616;-webkit-text-stroke:0;">5487</span>
<span class="t" style="transform:scaleX(0.905);left:283.63px;top:336.45px;font-size:14.00px;color:#161616;-webkit-text-stroke:0;">324</span>
<span class="t" style="transform:scaleX(0.872);left:268.83px;top:355.75px;font-size:14.00px;color:#161616;-webkit-text-stroke:0;">- (932)</span>
<span class="t" style="transform:scaleX(0.872);left:268.83px;top:375.15px;font-size:14.00px;color:#161616;-webkit-text-stroke:0;">- (389)</span>
<div style="left:427.80px;top:391.30px;width:63.00px;height:20.00px;background:transparent;border:1.3px solid #1e6b3f;"></div>
<div style="left:488.60px;top:409.20px;width:3.60px;height:3.60px;background:#1e6b3f;outline:0.6px solid #fff;"></div>
<svg style="left:250.20px;top:271.20px;" width="68.60" height="140.80" viewBox="0 0 68.6 140.8"><rect x="1.45" y="1.45" width="65.7" height="137.9" fill="none" stroke="#cb202e" stroke-width="2.9"/></svg>
<div style="left:702.50px;top:218.00px;width:17.50px;height:294.00px;background:#15140e;"></div>
<svg style="left:706.50px;top:222.50px;" width="10.00" height="6.50" viewBox="0 0 10 6.5"><path d="M5 0 L10 6.5 H0 Z" fill="#9d9d9d"/></svg>
<div style="left:708.50px;top:234.00px;width:6.80px;height:175.50px;background:#9c9c9c;border-radius:3.4px;"></div>
<svg style="left:706.50px;top:502.50px;" width="10.00" height="6.50" viewBox="0 0 10 6.5"><path d="M0 0 H10 L5 6.5 Z" fill="#9d9d9d"/></svg>
<div style="left:0.00px;top:511.60px;width:720.00px;height:28.00px;background:#15140e;"></div>
<svg style="left:21.00px;top:521.00px;" width="4.60" height="8.40" viewBox="0 0 4.6 8.4"><path d="M4.1 0.5 L0.5 4.2 L4.1 7.9" fill="none" stroke="#e0e0e0" stroke-width="1.2" stroke-linecap="round" stroke-linejoin="round" /></svg>
<svg style="left:49.40px;top:521.00px;" width="4.60" height="8.40" viewBox="0 0 4.6 8.4"><path d="M0.5 0.5 L4.1 4.2 L0.5 7.9" fill="none" stroke="#e0e0e0" stroke-width="1.2" stroke-linecap="round" stroke-linejoin="round" /></svg>
<div style="left:73.90px;top:523.90px;width:2.60px;height:2.60px;background:#f0f0f0;border-radius:50%;"></div>
<div style="left:78.20px;top:523.90px;width:2.60px;height:2.60px;background:#f0f0f0;border-radius:50%;"></div>
<div style="left:82.50px;top:523.90px;width:2.60px;height:2.60px;background:#f0f0f0;border-radius:50%;"></div>
<span class="t" style="transform:scaleX(0.894);left:105.26px;top:519.66px;font-size:13.40px;color:#fff;">Sheet3</span>
<div style="left:153.60px;top:517.00px;width:1.00px;height:15.00px;background:#3f3f3f;"></div>
<span class="t" style="transform:scaleX(0.894);left:165.76px;top:519.66px;font-size:13.40px;color:#fff;">Sheet4</span>
<div style="left:219.00px;top:511.50px;width:52.20px;height:24.00px;background:#fff;border-radius:0 0 4px 4px;"></div>
<span class="t" style="transform:scaleX(0.918);left:225.26px;top:519.06px;font-size:13.40px;color:#101010;-webkit-text-stroke:0.35px #101010;">Sheet5</span>
<div style="left:274.00px;top:517.00px;width:1.00px;height:15.00px;background:#3f3f3f;"></div>
<div style="left:213.80px;top:517.00px;width:1.00px;height:15.00px;background:#3f3f3f;"></div>
<div style="left:226.00px;top:531.70px;width:37.60px;height:1.90px;background:#1e6b3f;"></div>
<span class="t" style="transform:scaleX(0.894);left:285.76px;top:519.66px;font-size:13.40px;color:#fff;">Sheet6</span>
<div style="left:333.60px;top:517.00px;width:1.00px;height:15.00px;background:#3f3f3f;"></div>
<span class="t" style="transform:scaleX(0.985);left:345.76px;top:519.66px;font-size:13.40px;color:#fff;">She</span>
<div style="left:365.60px;top:514.00px;width:6.00px;height:20.00px;background:#15140e;"></div>
<div style="left:374.10px;top:523.60px;width:2.40px;height:2.40px;background:#f0f0f0;border-radius:50%;"></div>
<div style="left:377.80px;top:523.60px;width:2.40px;height:2.40px;background:#f0f0f0;border-radius:50%;"></div>
<div style="left:381.50px;top:523.60px;width:2.40px;height:2.40px;background:#f0f0f0;border-radius:50%;"></div>
<svg style="left:401.50px;top:520.00px;" width="10.00" height="10.00" viewBox="0 0 10 10"><path d="M5 0.5 V9.5 M0.5 5 H9.5" fill="none" stroke="#e0e0e0" stroke-width="1.1" stroke-linecap="round" stroke-linejoin="round" /></svg>
<div style="left:434.40px;top:520.60px;width:2.20px;height:2.20px;background:#e0e0e0;border-radius:50%;"></div>
<div style="left:434.40px;top:524.40px;width:2.20px;height:2.20px;background:#e0e0e0;border-radius:50%;"></div>
<div style="left:434.40px;top:528.20px;width:2.20px;height:2.20px;background:#e0e0e0;border-radius:50%;"></div>
<svg style="left:455.00px;top:521.00px;" width="5.50" height="8.00" viewBox="0 0 5.5 8"><path d="M5.5 0 V8 L0 4 Z" fill="#9d9d9d"/></svg>
<div style="left:465.00px;top:521.00px;width:212.00px;height:8.00px;background:#9c9c9c;border-radius:4px;"></div>
<svg style="left:694.00px;top:521.00px;" width="5.50" height="8.00" viewBox="0 0 5.5 8"><path d="M0 0 V8 L5.5 4 Z" fill="#9d9d9d"/></svg>
<div style="left:0.00px;top:538.80px;width:720.00px;height:21.00px;background:#161616;"></div>
<div style="left:0.00px;top:538.60px;width:720.00px;height:1.00px;background:#222220;"></div>
<span class="t" style="transform:scaleX(0.964);left:9.89px;top:545.41px;font-size:9.20px;color:#f0f0f0;">Ready</span>
<svg style="left:51.30px;top:543.20px;" width="13.40" height="12.00" viewBox="0 0 13.4 12"><rect x="0.7" y="0.7" width="11.6" height="9.8" rx="1" fill="none" stroke="#f0f0f0" stroke-width="1.2"/><path d="M0.7 3.4 H12.3 M2.4 5.8 H5 M2.4 8 H5" stroke="#f0f0f0" stroke-width="1.1"/><circle cx="9.6" cy="8.2" r="3.1" fill="#161616" stroke="#f0f0f0" stroke-width="1.2"/><circle cx="9.6" cy="8.2" r="1.3" fill="#f0f0f0"/></svg>
<svg style="left:79.00px;top:542.50px;" width="13.00" height="13.00" viewBox="0 0 13 13"><circle cx="5.4" cy="1.8" r="1.4" fill="none" stroke="#f4f4f4" stroke-width="1.1"/><path d="M0.6 3.6 Q5.4 5.6 10.2 3.6 M4 4.8 V7.6 L2 12.2 M6.8 4.8 V7.6 L7.6 9.4 M5.4 8 L4.4 10" fill="none" stroke="#f4f4f4" stroke-width="1.1" stroke-linecap="round"/><path d="M7.2 10.4 L9 12.4 L12.6 8.4 M8.4 8.6 L12.4 12.6" fill="none" stroke="#f4f4f4" stroke-width="1.1"/></svg>
<span class="t" style="transform:scaleX(1.007);left:94.89px;top:545.41px;font-size:9.20px;color:#f0f0f0;font-weight:bold;-webkit-text-stroke:0;">Accessibility: Investigate</span>
<div style="left:450.00px;top:539.40px;width:33.50px;height:19.60px;background:#2b2b2b;"></div>
<svg style="left:460.00px;top:543.50px;" width="11.60" height="11.00" viewBox="0 0 11.6 11"><rect x="0.6" y="0.6" width="10.4" height="9.8" fill="none" stroke="#fff" stroke-width="1.2"/><path d="M0.6 3.9 H11 M0.6 7.1 H11 M4.1 0.6 V10.4 M7.5 0.6 V10.4" stroke="#fff" stroke-width="1.1"/></svg>
<svg style="left:496.00px;top:543.50px;" width="12.00" height="11.00" viewBox="0 0 12 11"><rect x="0.6" y="0.6" width="10.8" height="9.8" fill="none" stroke="#f4f4f4" stroke-width="1.2"/><rect x="3.2" y="3" width="5.6" height="5" fill="none" stroke="#f4f4f4" stroke-width="1.1"/><path d="M4.6 4.8 H7.4 M4.6 6.4 H7.4" stroke="#f4f4f4" stroke-width="0.7"/></svg>
<svg style="left:531.00px;top:543.20px;" width="12.50" height="11.00" viewBox="0 0 12.5 11"><rect x="0.6" y="0.6" width="11.3" height="9.8" fill="none" stroke="#f4f4f4" stroke-width="1.2"/><path d="M4.4 0.6 V5.4 H8.4 V0.6" fill="none" stroke="#f4f4f4" stroke-width="1.1"/></svg>
<div style="left:559.20px;top:549.00px;width:5.60px;height:1.00px;background:#c4c4c4;"></div>
<div style="left:571.00px;top:549.00px;width:87.50px;height:1.00px;background:#b8b8b8;"></div>
<div style="left:612.50px;top:544.00px;width:4.00px;height:10.40px;background:#cfcfcf;border-radius:1px;"></div>
<svg style="left:663.00px;top:546.00px;" width="6.60" height="6.60" viewBox="0 0 6.6 6.6"><path d="M3.3 0.3 V6.3 M0.3 3.3 H6.3" fill="none" stroke="#c4c4c4" stroke-width="0.9" stroke-linecap="round" stroke-linejoin="round" /></svg>
<span class="t" style="transform:scaleX(1.005);left:680.89px;top:545.41px;font-size:9.20px;color:#f0f0f0;">100%</span>
</div></div>
</body></html>
